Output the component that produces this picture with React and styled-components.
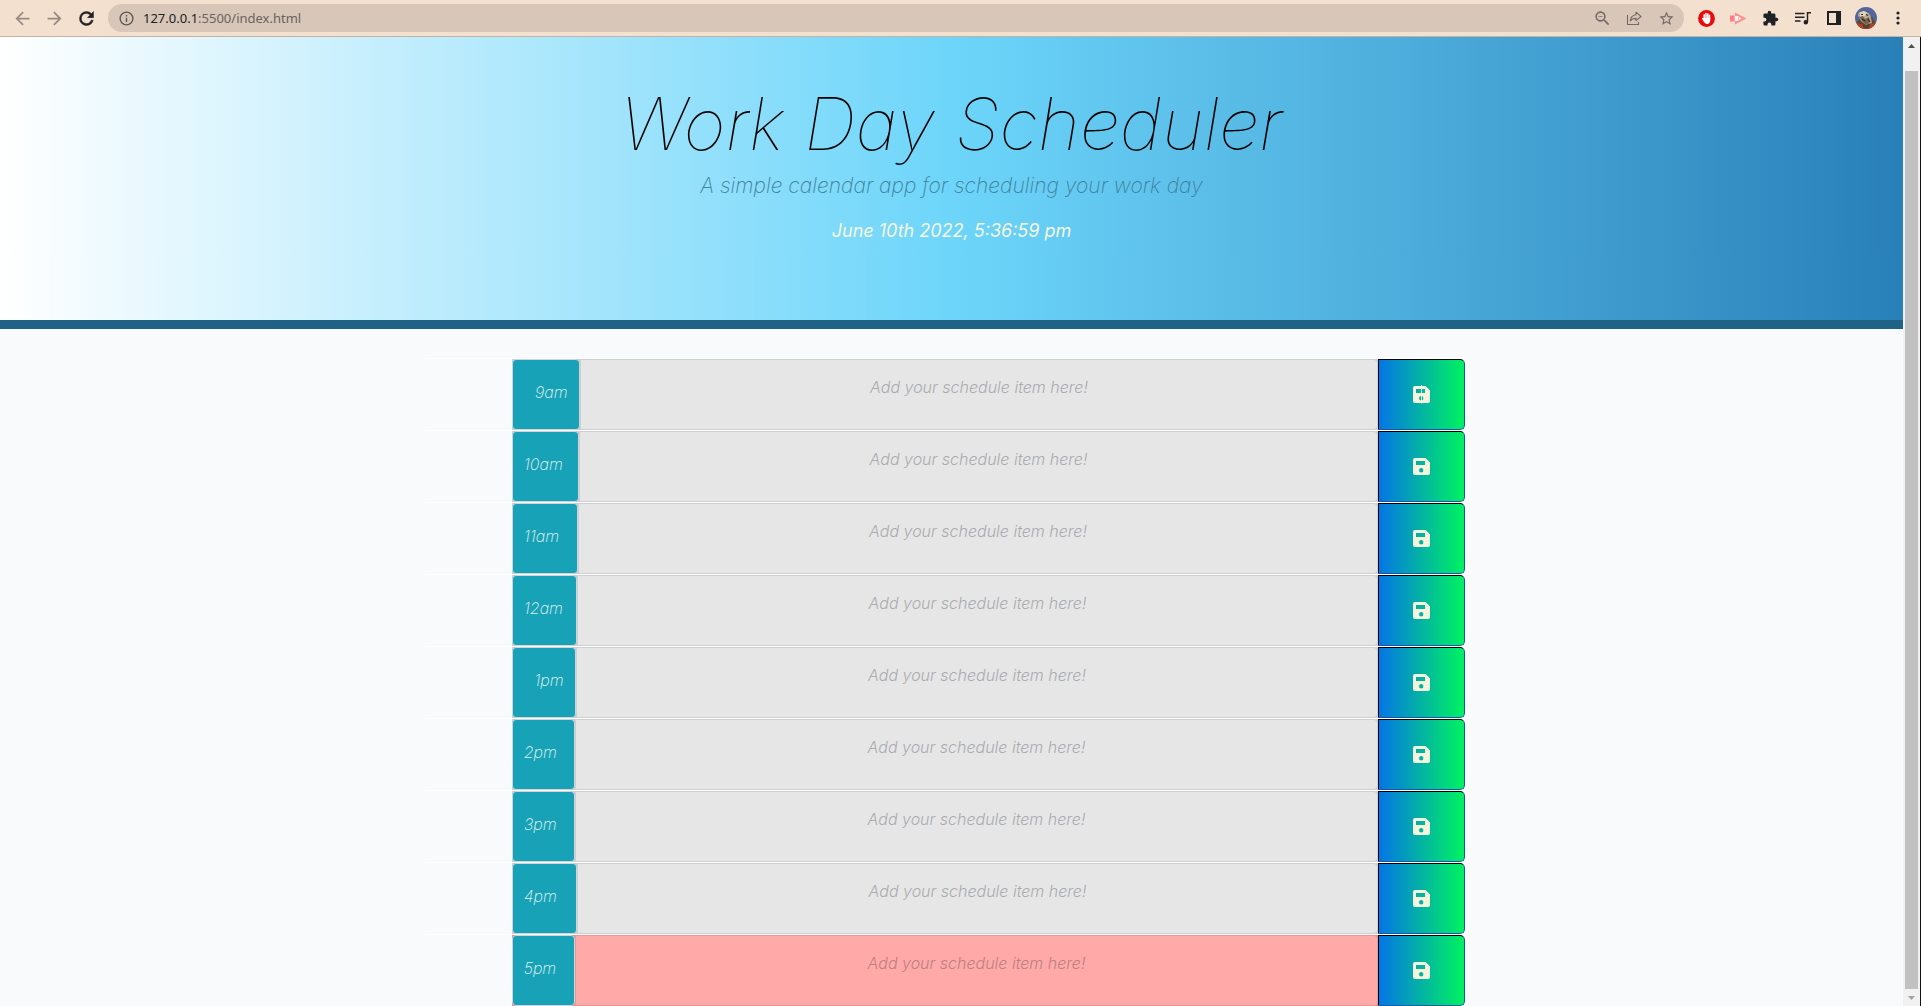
import React from "react";
import styled, { createGlobalStyle } from "styled-components";

const GlobalStyle = createGlobalStyle`
  *, *::before, *::after { box-sizing: border-box; }
  body { margin: 0; background: #f8fafc; font-family: "Inter", "Liberation Sans", sans-serif; }
`;

const Window = styled.div`
  display: flex;
  flex-direction: column;
  height: 100vh;
  overflow: hidden;
`;

const Toolbar = styled.div`
  display: flex;
  align-items: center;
  flex: none;
  height: 37px;
  padding: 0 7px 0 8px;
  background: #f4e0cf;
  border-bottom: 1px solid #c4b2a4;
`;

const IconButton = styled.button`
  display: flex;
  align-items: center;
  justify-content: center;
  flex: none;
  width: ${(p) => p.$width || 32}px;
  height: 28px;
  padding: 0;
  border: 0;
  background: none;
  color: ${(p) => p.$color || "#202124"};
`;

const AddressBar = styled.div`
  display: flex;
  align-items: center;
  flex: 1;
  min-width: 0;
  height: 28px;
  margin: 0 6px 0 8px;
  padding: 0 2px 0 10px;
  border-radius: 14px;
  background: #d8c6b8;
`;

const Url = styled.span`
  flex: 1;
  margin-left: 8px;
  font: 13px/20px "Noto Sans", sans-serif;
  color: #6b6360;

  b { font-weight: 400; color: #202124; }
`;

const Viewport = styled.div`
  display: flex;
  flex: 1;
  min-height: 0;
  border-right: 1px solid #14120a;
`;

const Page = styled.div`
  flex: 1;
  min-width: 0;
  overflow: hidden;
`;

const Header = styled.header`
  display: flex;
  flex-direction: column;
  align-items: center;
  height: 292px;
  padding-top: 47px;
  border-bottom: 9px solid #206285;
  background: linear-gradient(to right, #ffffff, #6dd5fa, #2980b9);
  font-style: italic;
  text-align: center;
`;

const Title = styled.h1`
  margin: 0;
  font-size: 72px;
  line-height: 80px;
  font-weight: 100;
  color: #000;
`;

const Lead = styled.p`
  margin: 8px 0 16px;
  font-size: 21px;
  line-height: 28px;
  font-weight: 200;
  color: #3f829c;
`;

const CurrentTime = styled.p`
  margin: 0;
  font-size: 18px;
  line-height: 30px;
  font-weight: 400;
  color: #f5f5dc;
`;

const Schedule = styled.main`
  padding: 29px 13px 0 0;
`;

const TimeBlock = styled.form`
  display: grid;
  grid-template-columns: 1fr 10fr 1fr;
  grid-template-rows: minmax(0, 1fr);
  width: 1040px;
  max-width: 100%;
  height: 72px;
  margin: 0 auto;
  border-top: 1px solid #fff;
`;

const Entry = styled.div`
  grid-column: 2;
  display: flex;
  min-width: 0;
  background: ${(p) => (p.$current ? "#f08a88" : "#d0d1d4")};
`;

const Hour = styled.label`
  display: flex;
  align-items: center;
  justify-content: ${(p) => (p.$indent ? "flex-end" : "flex-start")};
  flex: none;
  width: ${(p) => p.$width}px;
  padding: 0 11px 5px;
  border: 1px solid #ced4da;
  border-radius: 4px;
  background: #17a2b8;
  color: #e4f4ef;
  font-size: 16px;
  line-height: 24px;
  font-weight: 200;
  font-style: italic;
`;

const Item = styled.textarea`
  display: block;
  flex: 1;
  min-width: 0;
  height: 100%;
  padding: 15px 12px;
  border: 1px solid ${(p) => (p.$current ? "#e59997" : "#cfcfd1")};
  border-radius: 0 4px 4px 0;
  background: ${(p) => (p.$current ? "#ffaaa8" : "#e6e6e6")};
  font-family: inherit;
  font-size: 16px;
  line-height: 24px;
  font-weight: 300;
  font-style: italic;
  text-align: center;
  resize: none;
  overflow: hidden;

  &::placeholder {
    color: ${(p) => (p.$current ? "#bd7f80" : "#a9acaf")};
    opacity: 1;
  }
`;

const SaveButton = styled.button`
  display: flex;
  align-items: center;
  justify-content: center;
  padding: 0 1px 0 0;
  border: 1px solid;
  border-color: #000 #1458a8 #1458a8 #000;
  border-radius: 0 5px 5px 0;
  background: linear-gradient(to right, #0575e6, #00f260);
  color: #f5f5dc;
`;

const ScrollTrack = styled.div`
  display: flex;
  flex-direction: column;
  align-items: center;
  flex: none;
  width: 17px;
  background: #f1f1f1;
`;

const ScrollArrow = styled.div`
  display: flex;
  align-items: center;
  justify-content: center;
  height: 17px;
  color: ${(p) => p.$color};
`;

const ScrollThumb = styled.div`
  flex: 1;
  width: 13px;
  margin-top: 17px;
  background: #c1c1c1;
`;

const Glyph = ({ size = 16, box = 24, children, ...rest }) => (
  <svg width={size} height={size} viewBox={`0 0 ${box} ${box}`} fill="currentColor" aria-hidden="true" {...rest}>
    {children}
  </svg>
);

const Back = () => (
  <Glyph size={21}><path d="M20 11H7.83l5.59-5.59L12 4l-8 8 8 8 1.41-1.41L7.83 13H20v-2z" /></Glyph>
);
const Forward = () => (
  <Glyph size={21}><path d="M12 4l-1.41 1.41L16.17 11H4v2h12.17l-5.58 5.59L12 20l8-8z" /></Glyph>
);
const Reload = () => (
  <Glyph size={21}><path d="M17.65 6.35A7.95 7.95 0 0 0 12 4a8 8 0 1 0 7.73 10h-2.5A5.7 5.7 0 1 1 12 6.3c1.6 0 3.1.7 4.1 1.7L13 11h7V4l-2.35 2.35z" stroke="currentColor" strokeWidth=".5" /></Glyph>
);
const Info = () => (
  <Glyph size={17} color="#5f5a58"><path d="M11 7h2v2h-2zm0 4h2v6h-2zm1-9a10 10 0 1 0 0 20 10 10 0 0 0 0-20zm0 18a8 8 0 1 1 0-16 8 8 0 0 1 0 16z" /></Glyph>
);
const ZoomOut = () => (
  <Glyph size={19}><path d="M15.5 14h-.79l-.28-.27A6.5 6.5 0 1 0 13.73 14.43l.27.28v.79l5 4.99L20.49 19l-4.99-5zm-6 0a4.5 4.5 0 1 1 0-9 4.5 4.5 0 0 1 0 9zM7 9h5v1H7z" /></Glyph>
);
const Share = () => (
  <Glyph size={16} box={16} fill="none" stroke="currentColor" strokeWidth="1.1">
    <path d="M1.5 5v9.5h11V12" />
    <path d="M10 2.2 15 6.500l-5 4.200V8.400c-2.700-.1-4.600.8-5.800 2.600.3-3.200 2.200-5.800 5.800-6.200z" strokeLinejoin="round" />
  </Glyph>
);
const Star = () => (
  <Glyph size={17}><path d="M22 9.240l-7.190-.62L12 2 9.190 8.630 2 9.240l5.460 4.730L5.820 21 12 17.270 18.180 21l-1.630-7.030L22 9.240zM12 15.400l-3.760 2.270 1-4.280-3.320-2.880 4.380-.38L12 6.100l1.710 4.040 4.380.38-3.320 2.880 1 4.280L12 15.400z" /></Glyph>
);
const Blocker = () => (
  <Glyph size={17} box={17}>
    <circle cx="8.500" cy="8.500" r="8.400" fill="#e60c0c" />
    <g stroke="#fff" strokeWidth="1.500" strokeLinecap="round" fill="none">
      <path d="M6.200 9V4.800M8 8V3.600M9.800 8V4M11.500 9V5.200M4.700 8.600l1.900 2.600" />
    </g>
    <path d="M5.500 8h6.700v2.500c0 2-1.200 3.400-3.100 3.400-1.700 0-2.500-.9-3.600-2.900z" fill="#fff" />
  </Glyph>
);
const Recorder = () => (
  <Glyph size={17} box={17}>
    <path d="M0 5.500h4.500v6H0z" fill="#ff7d80" />
    <path d="M5 2.500 16.500 8.500 5 14.500z" fill="#ff8f90" />
    <path d="M5 6h3.500v5H5z" fill="#fff0ea" />
    <path d="M9 7 11.500 8.500 9 10z" fill="#fff" />
  </Glyph>
);
const Puzzle = () => (
  <Glyph size={17}><path d="M20.500 11H19V7a2 2 0 0 0-2-2h-4V3.500a2.500 2.500 0 0 0-5 0V5H4a2 2 0 0 0-1.990 2v3.800H3.500a2.700 2.700 0 0 1 0 5.400H2V20a2 2 0 0 0 2 2h3.800v-1.500a2.700 2.700 0 0 1 5.400 0V22H17a2 2 0 0 0 2-2v-4h1.500a2.500 2.500 0 0 0 0-5z" /></Glyph>
);
const Queue = () => (
  <Glyph size={17} box={17} fill="none" stroke="currentColor" strokeWidth="1.500">
    <path d="M1 3.500h9.500M1 7.200h9.500M1 10.900h5.500" />
    <path d="M17 2.800h-3.500v9" />
    <circle cx="11.800" cy="12.200" r="1.500" fill="currentColor" />
  </Glyph>
);
const SidePanel = () => (
  <Glyph size={14} box={14}><path d="M0 0h14v14H0zM2 2v10h7V2z" fillRule="evenodd" /></Glyph>
);
const Avatar = () => (
  <Glyph size={22} box={22}>
    <clipPath id="avatar-clip"><circle cx="11" cy="11" r="11" /></clipPath>
    <g clipPath="url(#avatar-clip)">
      <path d="M0 0h22v22H0z" fill="#54659b" />
      <path d="M3 22 2 15l4-4 11-1 4 7-1 5z" fill="#5d4634" />
      <path d="M3 8c0-3 3-4 6-3.500 4 .3 6 2.500 7 6.500l1 5-6 2-5-4z" fill="#b9aa93" />
      <path d="M5 5.500 9 4l3 2-2 3-5 1z" fill="#ded4bc" />
      <path d="m4 10 4-1 2 3 4-2 1 5-4 3-3-3z" fill="#78644e" />
      <path d="M6 7.500h2M11 7.500l2 1M7 12l3 2M13 12l2 3" stroke="#33271f" strokeWidth="1.200" />
      <path d="m1 16 5 1 4 3 4-2 6-2-1 6H3z" fill="#b8421e" />
      <path d="m8 17 3 2 3-3 1 4-4 2-3-2z" fill="#564334" />
    </g>
  </Glyph>
);
const Dots = () => (
  <Glyph size={16} box={16}><circle cx="8" cy="3" r="1.600" /><circle cx="8" cy="8" r="1.600" /><circle cx="8" cy="13" r="1.600" /></Glyph>
);
const Save = ({ caret }) => (
  <Glyph size={17} box={17} overflow="visible">
    <path d="M2 0h10.500L17 4.500V15a2 2 0 0 1-2 2H2a2 2 0 0 1-2-2V2a2 2 0 0 1 2-2zM3 3v4h9V3zM8.200 10a2.200 2.200 0 1 0 0 4.400 2.200 2.200 0 0 0 0-4.400z" fillRule="evenodd" />
    {caret && <path d="M8 -1h1v18.500h-1z" />}
  </Glyph>
);

const HOURS = [
  { label: "9am", width: 68, indent: true, caret: true },
  { label: "10am", width: 67 },
  { label: "11am", width: 66 },
  { label: "12am", width: 65 },
  { label: "1pm", width: 64, indent: true },
  { label: "2pm", width: 63 },
  { label: "3pm", width: 63 },
  { label: "4pm", width: 65 },
  { label: "5pm", width: 63, current: true },
];

const EXTENSIONS = [
  ["Ad blocker", Blocker],
  ["Recorder", Recorder],
  ["Extensions", Puzzle],
  ["Media queue", Queue],
  ["Side panel", SidePanel],
];

export default function App() {
  return (
    <Window>
      <GlobalStyle />
      <Toolbar>
        <IconButton $width={28} $color="#978b84" aria-label="Back"><Back /></IconButton>
        <IconButton $width={36} $color="#978b84" aria-label="Forward"><Forward /></IconButton>
        <IconButton $width={28} aria-label="Reload"><Reload /></IconButton>
        <AddressBar>
          <Info />
          <Url><b>127.0.0.1</b>:5500/index.html</Url>
          <IconButton $color="#736a66" aria-label="Zoom"><ZoomOut /></IconButton>
          <IconButton $color="#736a66" aria-label="Share"><Share /></IconButton>
          <IconButton $color="#736a66" aria-label="Bookmark"><Star /></IconButton>
        </AddressBar>
        {EXTENSIONS.map(([name, Icon]) => (
          <IconButton key={name} aria-label={name}><Icon /></IconButton>
        ))}
        <IconButton aria-label="Profile"><Avatar /></IconButton>
        <IconButton aria-label="Menu"><Dots /></IconButton>
      </Toolbar>
      <Viewport>
        <Page>
          <Header>
            <Title>Work Day Scheduler</Title>
            <Lead>A simple calendar app for scheduling your work day</Lead>
            <CurrentTime>June 10th 2022, 5:36:59 pm</CurrentTime>
          </Header>
          <Schedule>
            {HOURS.map(({ label, width, indent, current, caret }) => (
              <TimeBlock key={label} onSubmit={(e) => e.preventDefault()}>
                <Entry $current={current}>
                  <Hour htmlFor={`item-${label}`} $width={width} $indent={indent}>{label}</Hour>
                  <Item id={`item-${label}`} $current={current} placeholder="Add your schedule item here!" />
                </Entry>
                <SaveButton aria-label={`Save ${label}`}><Save caret={caret} /></SaveButton>
              </TimeBlock>
            ))}
          </Schedule>
        </Page>
        <ScrollTrack aria-hidden="true">
          <ScrollArrow $color="#505050">
            <svg width="7" height="4" viewBox="0 0 7 4" fill="currentColor"><path d="M3.500 0 7 4H0z" /></svg>
          </ScrollArrow>
          <ScrollThumb />
          <ScrollArrow $color="#a3a3a3">
            <svg width="7" height="4" viewBox="0 0 7 4" fill="currentColor"><path d="M3.500 4 7 0H0z" /></svg>
          </ScrollArrow>
        </ScrollTrack>
      </Viewport>
    </Window>
  );
}
